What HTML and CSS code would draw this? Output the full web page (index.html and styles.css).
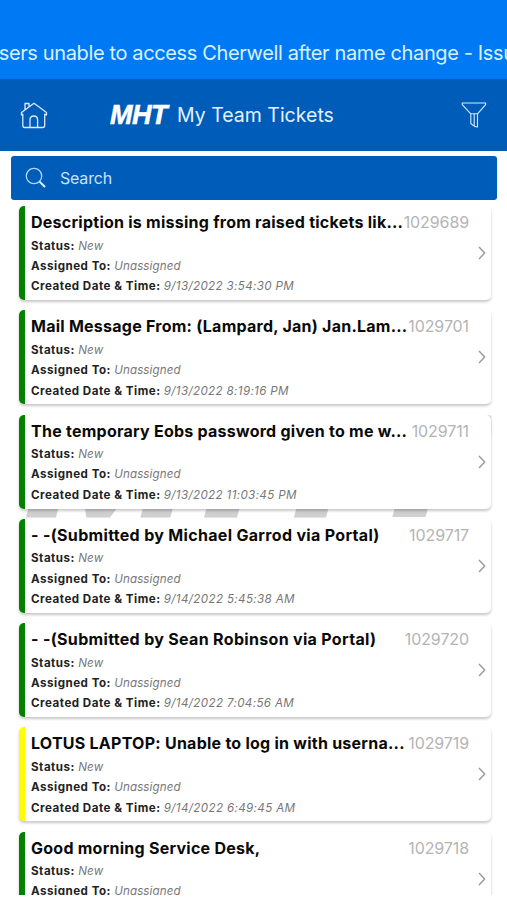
FILE: index.html
```html
<!DOCTYPE html>
<html lang="en">
<head>
<meta charset="utf-8">
<title>My Team Tickets</title>
<link rel="stylesheet" href="styles.css">
</head>
<body>
<div class="banner"><span class="ticker">Users unable to access Cherwell after name change - Issue</span></div>
<header class="bar">
  <svg class="home" viewBox="0 0 28 28"><path d="M1.5 14V11.5L14 2.2L26.5 11.5V14L24.7 13.2V24.5Q24.7 26.5 22.7 26.5H4.8Q2.8 26.5 2.8 24.5V13.2ZM5 8.8V2.5H9V5.8M10 26V19Q10 15 13.8 15T17.6 19V26"/></svg>
  <h1 class="title"><span class="logo">MHT</span><span class="name">My Team Tickets</span></h1>
  <svg class="filter" viewBox="0 0 26 28"><path d="M1.2 2H24.6V3.6L16.5 12.8V26L13.5 25.4L9.8 22.5V12.8L1.2 3.6ZM9.8 12.8H16.5M13.2 13V25"/></svg>
</header>
<div class="search">
  <svg class="glass" viewBox="0 0 22 22"><circle cx="9" cy="9" r="7.7"/><path class="handle" d="M14.6 14.6L20 20"/></svg>
  <span>Search</span>
</div>
<main class="list">
  <div class="watermark">MHT</div>
  <article class="card">
    <div class="info"><div class="top"><h2>Description is missing from raised tickets lik...</h2><span class="num">1029689</span></div>
    <p><b>Status:</b> <i>New</i></p><p><b>Assigned To:</b> <i>Unassigned</i></p><p><b>Created Date &amp; Time:</b> <i class="date">9/13/2022 3:54:30 PM</i></p></div>
    <svg class="chev" viewBox="0 0 8 14"><path d="M1 1L6.7 7L1 13"/></svg>
  </article>
  <article class="card">
    <div class="info"><div class="top"><h2>Mail Message From: (Lampard, Jan) Jan.Lam...</h2><span class="num">1029701</span></div>
    <p><b>Status:</b> <i>New</i></p><p><b>Assigned To:</b> <i>Unassigned</i></p><p><b>Created Date &amp; Time:</b> <i class="date">9/13/2022 8:19:16 PM</i></p></div>
    <svg class="chev" viewBox="0 0 8 14"><path d="M1 1L6.7 7L1 13"/></svg>
  </article>
  <article class="card">
    <div class="info"><div class="top"><h2>The temporary Eobs password given to me w...</h2><span class="num">1029711</span></div>
    <p><b>Status:</b> <i>New</i></p><p><b>Assigned To:</b> <i>Unassigned</i></p><p><b>Created Date &amp; Time:</b> <i class="date">9/13/2022 11:03:45 PM</i></p></div>
    <svg class="chev" viewBox="0 0 8 14"><path d="M1 1L6.7 7L1 13"/></svg>
  </article>
  <article class="card">
    <div class="info"><div class="top"><h2 class="wide">- -(Submitted by Michael Garrod via Portal)</h2><span class="num">1029717</span></div>
    <p><b>Status:</b> <i>New</i></p><p><b>Assigned To:</b> <i>Unassigned</i></p><p><b>Created Date &amp; Time:</b> <i class="date">9/14/2022 5:45:38 AM</i></p></div>
    <svg class="chev" viewBox="0 0 8 14"><path d="M1 1L6.7 7L1 13"/></svg>
  </article>
  <article class="card">
    <div class="info"><div class="top"><h2 class="wide">- -(Submitted by Sean Robinson via Portal)</h2><span class="num">1029720</span></div>
    <p><b>Status:</b> <i>New</i></p><p><b>Assigned To:</b> <i>Unassigned</i></p><p><b>Created Date &amp; Time:</b> <i class="date">9/14/2022 7:04:56 AM</i></p></div>
    <svg class="chev" viewBox="0 0 8 14"><path d="M1 1L6.7 7L1 13"/></svg>
  </article>
  <article class="card yellow">
    <div class="info"><div class="top"><h2>LOTUS LAPTOP: Unable to log in with userna...</h2><span class="num">1029719</span></div>
    <p><b>Status:</b> <i>New</i></p><p><b>Assigned To:</b> <i>Unassigned</i></p><p><b>Created Date &amp; Time:</b> <i class="date">9/14/2022 6:49:45 AM</i></p></div>
    <svg class="chev" viewBox="0 0 8 14"><path d="M1 1L6.7 7L1 13"/></svg>
  </article>
  <article class="card">
    <div class="info"><div class="top"><h2>Good morning Service Desk,</h2><span class="num">1029718</span></div>
    <p><b>Status:</b> <i>New</i></p><p><b>Assigned To:</b> <i>Unassigned</i></p></div>
    <svg class="chev" viewBox="0 0 8 14"><path d="M1 1L6.7 7L1 13"/></svg>
  </article>
</main>
</body>
</html>
```
FILE: styles.css
```css
* { box-sizing: border-box; margin: 0; padding: 0; }
body { width: 507px; height: 900px; overflow: hidden; background: #fff; font-family: Inter, "Liberation Sans", sans-serif; }
svg { fill: none; stroke: #d9eaff; stroke-width: 1.3; stroke-linejoin: round; flex: none; }
.banner { height: 79px; background: #007af4; overflow: hidden; padding-top: 39px; display: flex; justify-content: flex-end; }
.ticker { font-size: 20px; line-height: 28px; letter-spacing: -0.37px; white-space: nowrap; color: #d9f1ff; flex: none; margin-right: -19px; }
.bar { height: 72px; background: #005cb9; display: flex; align-items: center; padding: 0 20px; }
.home { width: 28px; height: 28px; }
.title { display: flex; align-items: center; margin-left: 61px; color: #e4f1ff; font-weight: 400; white-space: nowrap; }
.logo { font-family: "Liberation Sans", sans-serif; font-size: 27px; font-weight: 700; font-style: italic; color: #fff; width: 59px; letter-spacing: -0.5px; padding-left: 1px; -webkit-text-stroke: 0.6px #fff; }
.name { font-size: 19.5px; margin-left: 9px; }
.filter { width: 26px; height: 28px; margin-left: auto; stroke-width: 1.1; }
.search { margin: 5px 10px 0 11px; height: 44px; border-radius: 3px; background: #005cb9; color: #c9e2fa; display: flex; align-items: center; padding-left: 14px; font-size: 16px; }
.search span { margin-left: 13px; letter-spacing: -0.2px; }
.glass { width: 22px; height: 22px; stroke: #b5d6f7; }
.handle { stroke-width: 2; stroke: #e4f3ff; }
.list { position: relative; height: 695px; overflow: hidden; padding: 6px 16px 0 19px; }
.watermark { position: absolute; left: 25px; top: 192px; width: 333px; overflow: hidden; font-family: "Liberation Sans", sans-serif; font-size: 143px; line-height: 150px; font-weight: 700; font-style: italic; letter-spacing: 8px; color: #d0d0d0; -webkit-text-stroke: 3px #d0d0d0; white-space: nowrap; transform: scaleX(1.4); transform-origin: left top; }
.card { position: relative; height: 94px; margin-bottom: 10.25px; border-left: 6px solid #008200; border-radius: 5px; background: #fff; box-shadow: 0 2px 3px rgba(0,0,0,.22); display: flex; align-items: center; justify-content: space-between; padding: 0 5px 0 6px; }
.card.yellow { border-left-color: #ff0; }
.info { width: 438px; height: 94px; padding-top: 5px; }
.top { display: flex; justify-content: space-between; height: 24.5px; line-height: 22px; white-space: nowrap; }
h2 { font-size: 16px; font-weight: 700; letter-spacing: .25px; color: #0a0a0a; }
h2.wide { letter-spacing: .32px; }
.num { font-size: 16px; letter-spacing: -0.1px; color: #b4b4b4; }
p { height: 20.4px; line-height: 20px; font-size: 11.6px; color: #777; white-space: nowrap; }
p b { color: #222; letter-spacing: .5px; }
p i { letter-spacing: .1px; }
p i.date { letter-spacing: .36px; }
.chev { width: 8px; height: 14px; stroke: #999; stroke-width: 1.4; }
```
